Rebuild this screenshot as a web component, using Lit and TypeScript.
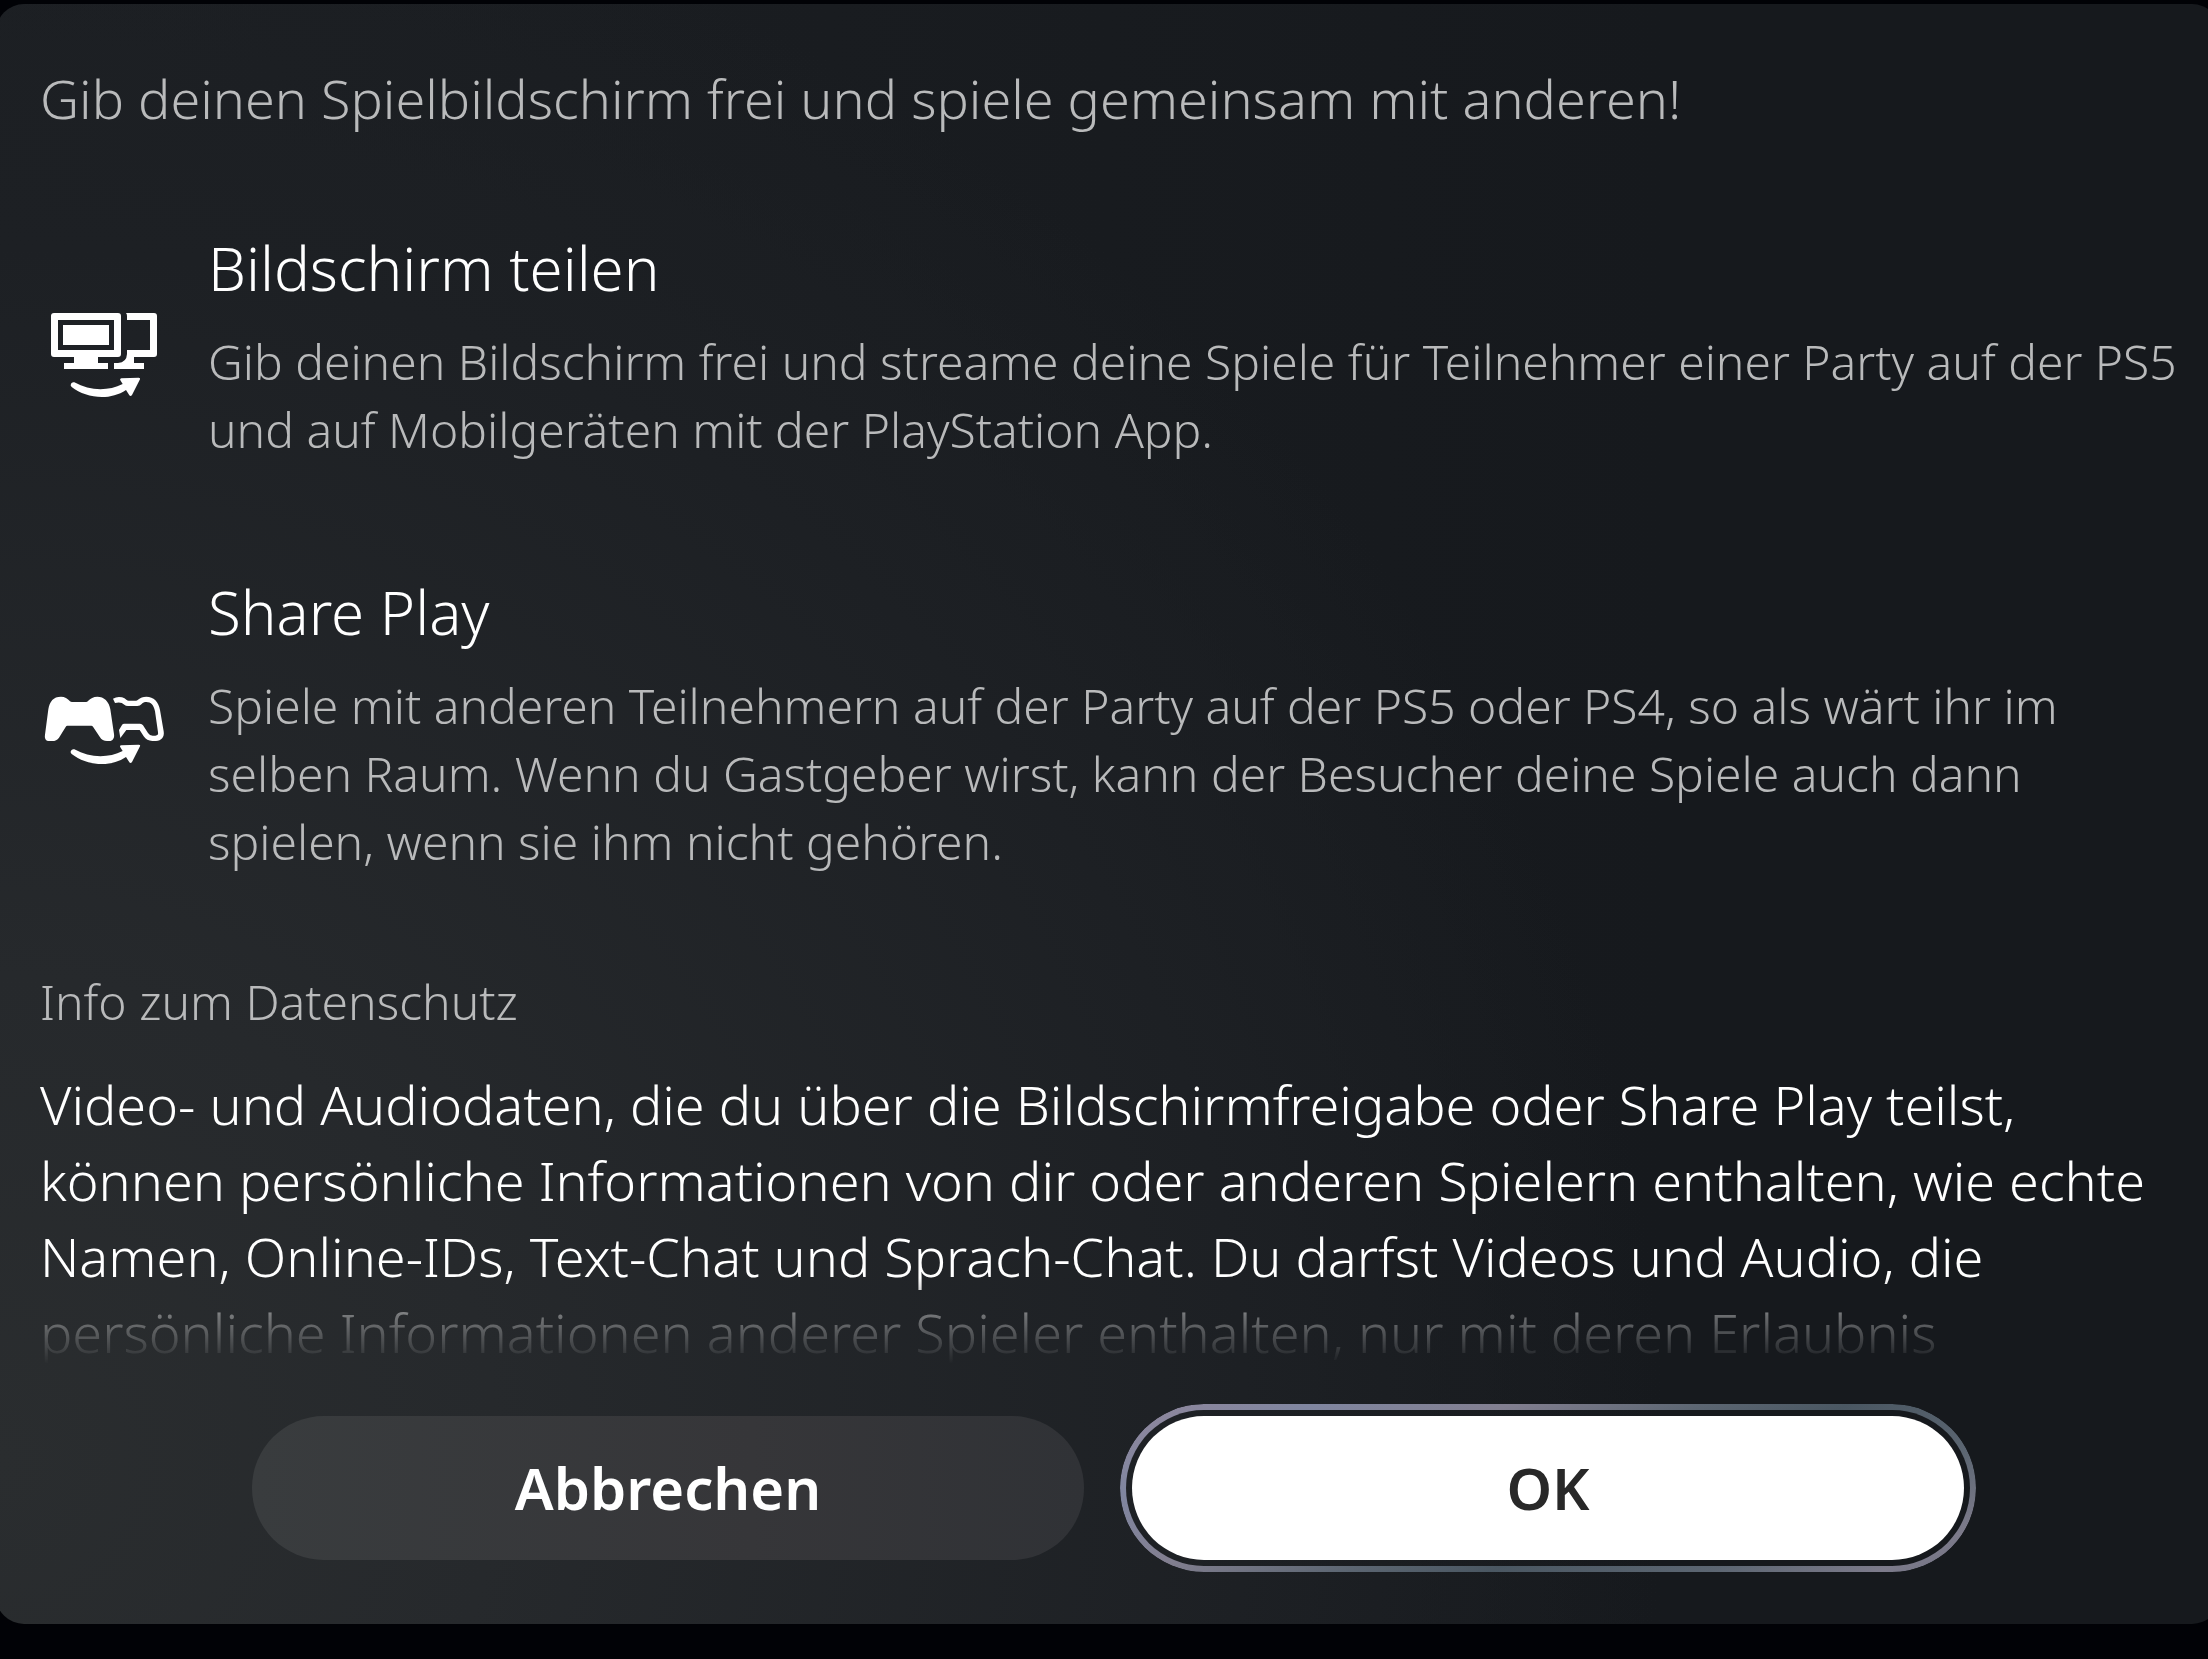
import { LitElement, html, css, svg, type TemplateResult } from "lit";
import { customElement } from "lit/decorators.js";

interface Feature {
  title: string;
  text: string;
  icon: TemplateResult;
}

const arrow = svg`<path d="M133 277 Q126 275 123 281 Q120 287 125 291 C167 324 238 334 288 300 L298 316 Q302 321 306 315 L330 268 Q332 263 326 263 L274 265 Q268 266 271 271 L278 282 C234 304 180 303 133 277 Z"/>`;

const screens = html`<svg class="icon" viewBox="30 -27 390 390" aria-hidden="true">
  <path fill-rule="evenodd" d="M72 69 H264 Q273 69 273 78 V192 Q273 201 264 201 H204 V219 H234 V237 H102 V219 H132 V201 H72 Q63 201 63 192 V78 Q63 69 72 69 Z M84 90 V180 H252 V90 Z"/>
  <path d="M99 105 H237 V165 H99 Z"/>
  <path d="M288 69 H372 Q381 69 381 78 V192 Q381 201 372 201 H312 V219 H342 V237 H252 V219 H264 Q290 217 291 192 V180 H360 V90 H291 V78 Q291 72 288 69 Z"/>
  ${arrow}
</svg>`;

const pads = html`<svg class="icon" viewBox="30 -33 390 390" aria-hidden="true">
  <path d="M93 80 C104 80 113 85 120 94 Q122 96 126 96 H168 Q172 96 174 93 C182 85 190 80 202 80 C222 80 237 94 241 118 L252 192 C254 205 248 213 238 213 H231 C222 213 214 209 209 200 L189 170 Q187 167 184 167 H112 Q109 167 107 171 L87 203 C82 210 76 213 66 213 H58 C48 213 43 206 45 194 L55 118 C59 94 70 80 93 80 Z"/>
  <path d="M249 86 Q262 78 276 82 Q284 84 290 90 Q292 92 296 92 H318 Q321 92 324 89 C331 83 339 80 349 80 C371 80 386 95 390 120 L401 184 C404 201 394 213 378 213 H367 C356 213 347 208 341 199 L329 180 H289 L271 204 L267 180 L276 165 Q278 161 283 161 H330 Q336 161 339 166 L354 189 Q359 197 368 197 H376 Q386 197 384 187 L375 124 C371 105 363 96 349 96 C343 96 339 98 335 102 Q330 108 322 108 H294 Q287 108 283 104 Q273 94 255 99 Z"/>
  <g transform="translate(0 -39)">${arrow}</g>
</svg>`;

const features: Feature[] = [
  {
    title: "Bildschirm teilen",
    text: "Gib deinen Bildschirm frei und streame deine Spiele für Teilnehmer einer Party auf der PS5 und auf Mobilgeräten mit der PlayStation App.",
    icon: screens,
  },
  {
    title: "Share Play",
    text: "Spiele mit anderen Teilnehmern auf der Party auf der PS5 oder PS4, so als wärt ihr im selben Raum. Wenn du Gastgeber wirst, kann der Besucher deine Spiele auch dann spielen, wenn sie ihm nicht gehören.",
    icon: pads,
  },
];

@customElement("app-root")
export class AppRoot extends LitElement {
  static styles = css`
    :host {
      display: flex;
      flex-direction: column;
      box-sizing: border-box;
      min-height: 100vh;
      padding: 4px 0 35px;
      overflow: hidden;
      background: #010206;
      color: #fff;
      font-family: "Noto Sans", "Open Sans", sans-serif;
      font-weight: 300;
    }
    .dialog {
      flex: 1;
      display: flex;
      flex-direction: column;
      margin: 0 -12px 0 -4px;
      padding: 56px 28px 64px;
      border-radius: 28px;
      background:
        radial-gradient(ellipse 75% 100% at 0% 90%, #2a2d2f 0%, #26292c 30%, #1d2024 75%, transparent 100%),
        linear-gradient(90deg, #1c1f23, #16191d 75%);
    }
    .content {
      display: flex;
      flex-direction: column;
      padding-left: 16px;
      -webkit-mask-image: linear-gradient(to top, transparent 6px, rgb(0 0 0 / 36%) 54px, #000 92px);
      mask-image: linear-gradient(to top, transparent 6px, rgb(0 0 0 / 36%) 54px, #000 92px);
    }
    h1, h2, h3, p, ul {
      margin: 0;
      padding: 0;
      font-weight: 300;
    }
    .intro, .notice {
      font-size: 54px;
      line-height: 76px;
    }
    .intro, .text, .label {
      color: #b9babb;
    }
    .features {
      display: flex;
      flex-direction: column;
      gap: 108px;
      margin: 92px 0;
      list-style: none;
    }
    .feature {
      display: grid;
      grid-template-columns: 130px 1fr;
      column-gap: 38px;
      align-items: center;
    }
    .icon {
      display: block;
      width: 130px;
      height: 130px;
      fill: #fff;
    }
    .title {
      margin-bottom: 20px;
      font-size: 60px;
      line-height: 80px;
    }
    .text, .label {
      font-size: 48px;
      line-height: 68px;
    }
    .label {
      margin-bottom: 30px;
    }
    .actions {
      display: flex;
      justify-content: center;
      gap: 48px;
      margin-top: 46px;
    }
    .button {
      position: relative;
      flex: 0 1 832px;
      height: 144px;
      padding: 0;
      border: 0;
      border-radius: 72px;
      background: linear-gradient(90deg, #393c3e, #363639 60%, #303236);
      color: #fff;
      font: 600 58px/80px "Noto Sans", "Open Sans", sans-serif;
      outline: none;
      cursor: pointer;
    }
    .primary {
      background: #fff;
      color: #282828;
    }
    .ring {
      position: absolute;
      inset: -12px;
      border: 6px solid transparent;
      border-radius: 84px;
      background: linear-gradient(155deg, #91879c 0%, #8086a0 16%, #827f90 32%, #5c6672 48%, #4a5762 60%, #5c6672 78%, #7d7b8b 92%, #6d7080 100%) border-box;
      -webkit-mask: linear-gradient(#000 0 0) padding-box, linear-gradient(#000 0 0) border-box;
      -webkit-mask-composite: xor;
      mask-composite: exclude;
      pointer-events: none;
    }
  `;

  render() {
    return html`
      <main class="dialog">
        <div class="content">
          <h1 class="intro">Gib deinen Spielbildschirm frei und spiele gemeinsam mit anderen!</h1>
          <ul class="features">
            ${features.map(
              (f) => html`<li class="feature">
                ${f.icon}
                <div>
                  <h2 class="title">${f.title}</h2>
                  <p class="text">${f.text}</p>
                </div>
              </li>`
            )}
          </ul>
          <h3 class="label">Info zum Datenschutz</h3>
          <p class="notice">
            Video- und Audiodaten, die du über die Bildschirmfreigabe oder Share Play teilst, können
            persönliche Informationen von dir oder anderen Spielern enthalten, wie echte Namen,
            Online-IDs, Text-Chat und Sprach-Chat. Du darfst Videos und Audio, die persönliche
            Informationen anderer Spieler enthalten, nur mit deren Erlaubnis
          </p>
        </div>
        <div class="actions">
          <button class="button" type="button">Abbrechen</button>
          <button class="button primary" type="button">OK<span class="ring"></span></button>
        </div>
      </main>
    `;
  }
}
